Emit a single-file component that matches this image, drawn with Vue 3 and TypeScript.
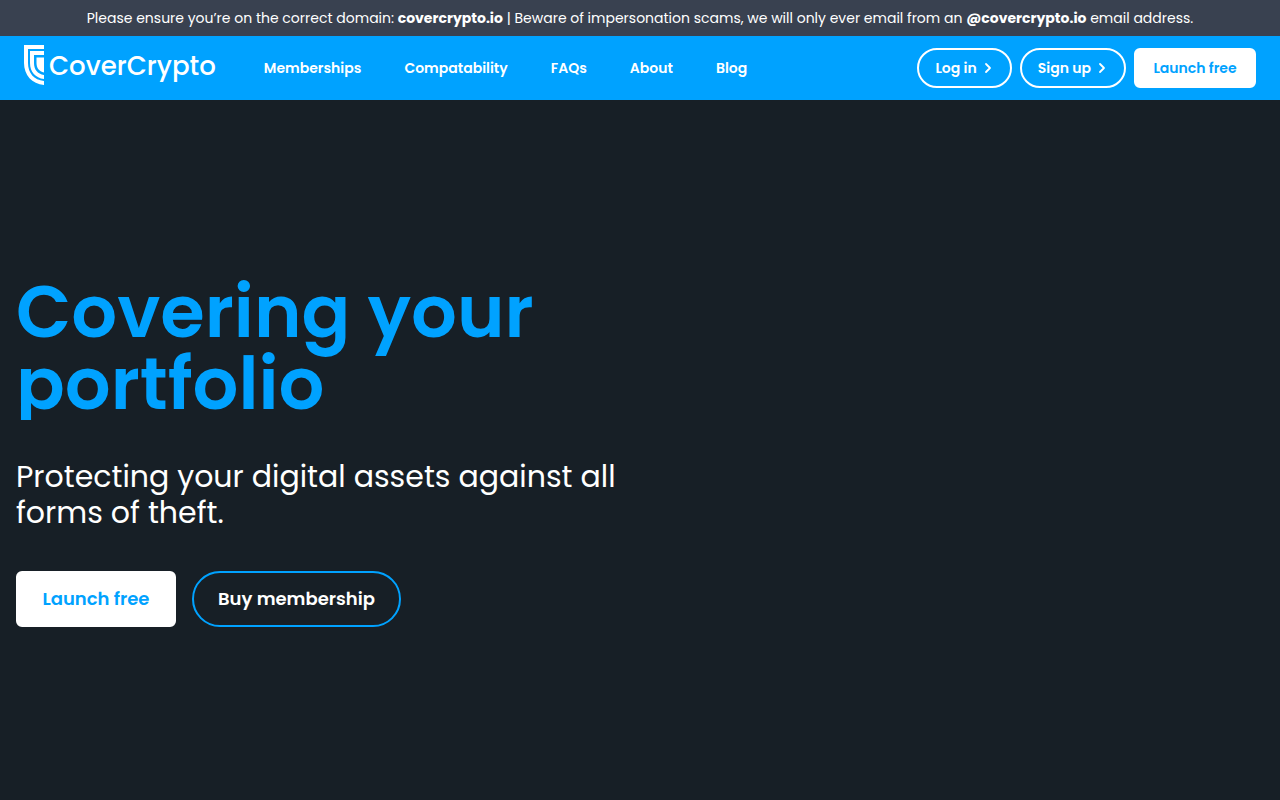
<script setup lang="ts">
interface NavItem {
  label: string
  href: string
}

const navItems: NavItem[] = [
  { label: 'Memberships', href: '#memberships' },
  { label: 'Compatability', href: '#compatability' },
  { label: 'FAQs', href: '#faqs' },
  { label: 'About', href: '#about' },
  { label: 'Blog', href: '#blog' },
]

const accountLinks: NavItem[] = [
  { label: 'Log in', href: '#login' },
  { label: 'Sign up', href: '#signup' },
]
</script>

<template>
  <div class="page">
    <p class="notice">
      Please ensure you’re on the correct domain: <strong>covercrypto.io</strong> | Beware of
      impersonation scams, we will only ever email from an <strong>@covercrypto.io</strong> email
      address.
    </p>

    <header class="header">
      <a class="brand" href="#home">
        <svg class="shield" viewBox="0 0 20 40" width="20" height="40" aria-hidden="true">
          <path d="M0 0H20V4H4V18C4 28 10 35 20 36V40C8 39 0 30 0 18Z" />
          <path d="M6 6H20V10H10V18C10 24.500 13.500 29 20 30V34C11.500 33 6 27 6 18Z" />
          <path d="M12.500 12.500H20V27.500C15 26.500 12.500 23 12.500 18Z" />
        </svg>
        <span class="wordmark">CoverCrypto</span>
      </a>

      <nav class="nav" aria-label="Main">
        <a v-for="item in navItems" :key="item.label" :href="item.href">{{ item.label }}</a>
      </nav>

      <div class="actions">
        <a
          v-for="link in accountLinks"
          :key="link.label"
          class="button pill"
          :href="link.href"
        >
          {{ link.label }}
          <svg class="chevron" viewBox="0 0 12 12" width="12" height="12" aria-hidden="true">
            <path d="M4 2L8 6L4 10" />
          </svg>
        </a>
        <a class="button solid" href="#launch">Launch free</a>
      </div>
    </header>

    <main class="hero">
      <div class="hero-content">
        <h1>Covering your portfolio</h1>
        <p class="lead">Protecting your digital assets against all forms of theft.</p>
        <div class="hero-actions">
          <a class="button solid large" href="#launch">Launch free</a>
          <a class="button pill large outlined" href="#memberships">Buy membership</a>
        </div>
      </div>
    </main>
  </div>
</template>

<style>
body {
  margin: 0;
  background: #171f26;
}
</style>

<style scoped>
.page {
  display: flex;
  flex-direction: column;
  min-height: 100vh;
  background: #171f26;
  color: #fff;
  font-family: Poppins, Inter, sans-serif;
  text-rendering: optimizeSpeed;
}

.notice {
  margin: 0;
  padding: 8px 16px;
  background: #394150;
  font-size: 14px;
  line-height: 20px;
  text-align: center;
}

.notice strong {
  font-weight: 700;
}

.header {
  display: flex;
  align-items: center;
  box-sizing: border-box;
  min-height: 64px;
  padding: 0 24px;
  background: #00a2ff;
}

a {
  color: inherit;
  text-decoration: none;
}

.brand {
  display: flex;
  align-items: center;
  gap: 5px;
  margin-right: 48px;
  padding-bottom: 6px;
}

.shield {
  fill: #fff;
}

.wordmark {
  padding-top: 2px;
  font-size: 26px;
  font-weight: 500;
  line-height: 38px;
}

.nav {
  display: flex;
  gap: 43px;
  font-size: 14px;
  font-weight: 600;
  line-height: 20px;
}

.actions {
  display: flex;
  gap: 8px;
  margin-left: auto;
}

.button {
  display: inline-flex;
  align-items: center;
  justify-content: center;
  box-sizing: border-box;
  height: 40px;
  padding: 0 16px;
  border: 2px solid #fff;
  font-size: 14px;
  font-weight: 600;
  line-height: 20px;
  white-space: nowrap;
}

.pill {
  gap: 5px;
  border-radius: 28px;
}

.solid {
  min-width: 122px;
  border-radius: 6px;
  background: #fff;
  color: #00a2ff;
}

.chevron {
  fill: none;
  stroke: #fff;
  stroke-width: 1.800;
  stroke-linecap: round;
  stroke-linejoin: round;
}

.hero {
  display: flex;
  flex: 1;
  align-items: center;
  padding: 3px 16px 0;
}

.hero-content {
  max-width: 624px;
}

h1 {
  margin: 0 0 39px;
  overflow: hidden;
  color: #00a2ff;
  font-size: 72px;
  font-weight: 600;
  line-height: 72px;
}

.lead {
  margin: 0 0 40px;
  font-size: 30px;
  line-height: 36px;
}

.hero-actions {
  display: flex;
  gap: 16px;
}

.large {
  height: 56px;
  padding: 0 24px;
  font-size: 18px;
  line-height: 28px;
}

.large.solid {
  min-width: 160px;
}

.outlined {
  border-color: #00a2ff;
}
</style>
